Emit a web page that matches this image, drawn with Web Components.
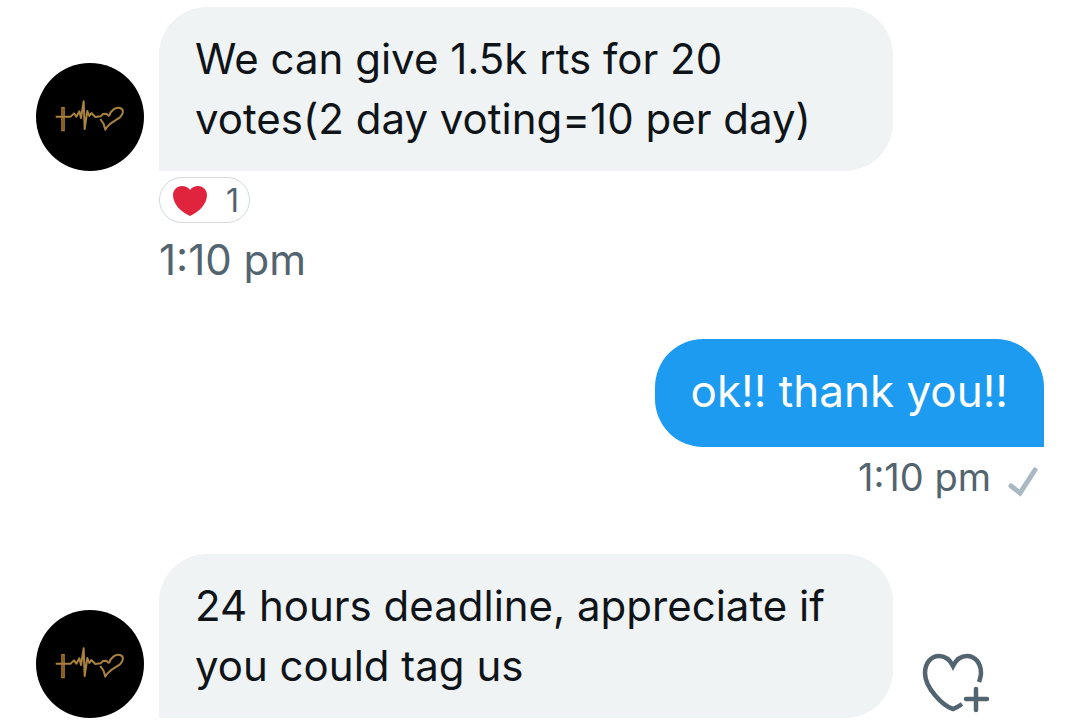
<!DOCTYPE html>
<html lang="en">
<head>
<meta charset="utf-8">
<meta name="viewport" content="width=device-width, initial-scale=1">
<title>Messages</title>
<style>
	body {
		margin: 0;
		background: #ffffff;
		color: #0f1419;
		font-family: Inter, "Noto Sans", sans-serif;
	}
</style>
</head>
<body>
<message-thread>
	<chat-message type="received">
		We can give 1.5k rts for 20 votes(2 day voting=10 per day)
		<reaction-pill slot="reactions" count="1"></reaction-pill>
		<message-time slot="time">1:10 pm</message-time>
	</chat-message>
	<chat-message type="sent">
		ok!! thank you!!
		<message-time slot="time" delivered>1:10 pm</message-time>
	</chat-message>
	<chat-message type="received">
		24 hours deadline, appreciate if you could tag us
		<add-reaction slot="action"></add-reaction>
	</chat-message>
</message-thread>

<script>
// Column of messages
class MessageThread extends HTMLElement {
	constructor() {
		super();
		this.attachShadow({ mode: 'open' });
		this.shadowRoot.innerHTML = `
			<style>
				:host {
					display: block;
				}
				main {
					display: flex;
					flex-direction: column;
					gap: 56px;
					padding: 7px 36px 0;
				}
			</style>
			<main><slot></slot></main>
		`;
	}
}
customElements.define('message-thread', MessageThread);

// Round profile picture: cross, heartbeat and heart in gold
class UserAvatar extends HTMLElement {
	constructor() {
		super();
		this.attachShadow({ mode: 'open' });
		this.shadowRoot.innerHTML = `
			<style>
				:host {
					display: block;
					width: 108px;
					height: 108px;
					border-radius: 50%;
					background: #000000;
					overflow: hidden;
				}
				svg {
					display: block;
					width: 100%;
					height: 100%;
				}
			</style>
			<svg viewBox="18 24 324 324" fill="none" stroke-linejoin="round" role="img" aria-label="Profile picture">
				<path d="M99 156V229" stroke="#a8772c" stroke-width="11"/>
				<path d="M99 160V225" stroke="#6a4718" stroke-width="3"/>
				<path d="M77 185H122L132 175L139 185L148 169L153 189L161 139L164 222L172 168L178 183L184 174L196 186L212 184L219 177L229 176L237 184" stroke="#a98240" stroke-width="6"/>
				<path d="M237 184C242 165 258 156 270 159C283 163 280 178 270 187C258 196 234 205 226 224L221 207L211 192" stroke="#a98240" stroke-width="6"/>
			</svg>
		`;
	}
}
customElements.define('user-avatar', UserAvatar);

// One message: avatar, bubble, optional action, with a footer under the bubble
class ChatMessage extends HTMLElement {
	constructor() {
		super();
		this.attachShadow({ mode: 'open' });
	}

	connectedCallback() {
		const received = this.getAttribute('type') === 'received';
		this.shadowRoot.innerHTML = `
			<style>
				:host {
					display: block;
				}
				article {
					display: grid;
					column-gap: 15px;
				}
				article.received {
					grid-template-columns: 108px 1fr 136px;
				}
				article.sent {
					grid-template-columns: 1fr;
				}
				user-avatar,
				.action {
					align-self: end;
				}
				.action {
					padding-left: 12px;
				}
				.bubble {
					margin: 0;
					padding: 22px 36px;
					border-radius: 48px 48px 48px 0;
					background: #eff3f4;
					font-size: 42px;
					line-height: 60px;
				}
				.sent .bubble {
					justify-self: end;
					padding-bottom: 26px;
					border-radius: 48px 48px 0 48px;
					background: #1d9bf0;
					color: #ffffff;
					font-size: 44px;
				}
				footer {
					display: flex;
					flex-direction: column;
					align-items: flex-start;
				}
				.received footer {
					grid-column: 2;
				}
				.sent footer {
					align-items: flex-end;
				}
			</style>
			<article class="${received ? 'received' : 'sent'}">
				${received ? '<user-avatar></user-avatar>' : ''}
				<p class="bubble"><slot></slot></p>
				${received ? '<div class="action"><slot name="action"></slot></div>' : ''}
				<footer>
					<slot name="reactions"></slot>
					<slot name="time"></slot>
				</footer>
			</article>
		`;
	}
}
customElements.define('chat-message', ChatMessage);

// Heart reaction with its count
class ReactionPill extends HTMLElement {
	constructor() {
		super();
		this.attachShadow({ mode: 'open' });
	}

	connectedCallback() {
		this.shadowRoot.innerHTML = `
			<style>
				:host {
					display: block;
					margin: 6px 0 9px;
				}
				button {
					display: flex;
					align-items: center;
					gap: 19px;
					height: 46px;
					margin: 0;
					padding: 2px 10px 0 13px;
					border: 1px solid #cfd9de;
					border-radius: 23px;
					background: #ffffff;
					color: #536471;
					font-family: inherit;
					font-size: 32px;
					line-height: 42px;
				}
				svg {
					width: 34px;
					height: 30px;
				}
			</style>
			<button type="button">
				<svg viewBox="0 0 34 30" aria-hidden="true">
					<path fill="#e0243d" d="M17 4C19 1 22 0 25 0C30 0 34 4 34 9C34 18 26 26 17 30C8 26 0 18 0 9C0 4 4 0 9 0C12 0 15 1 17 4Z"/>
				</svg>
				<span>${this.getAttribute('count')}</span>
			</button>
		`;
	}
}
customElements.define('reaction-pill', ReactionPill);

// Time of a message, with a tick once it is delivered
class MessageTime extends HTMLElement {
	constructor() {
		super();
		this.attachShadow({ mode: 'open' });
	}

	connectedCallback() {
		this.shadowRoot.innerHTML = `
			<style>
				:host {
					display: flex;
					gap: 17px;
					padding-top: 5px;
					color: #536471;
					font-size: 42px;
					line-height: 46px;
				}
				:host([delivered]) {
					padding-top: 9px;
					font-size: 38px;
					line-height: 42px;
				}
				svg {
					width: 36px;
					height: 42px;
				}
			</style>
			<time><slot></slot></time>
			${this.hasAttribute('delivered') ? `
				<svg viewBox="0 0 36 42" fill="none" stroke="#aab8c2" stroke-width="5" stroke-linecap="round" role="img" aria-label="Sent">
					<path d="M3 30L12 37L27 14"/>
				</svg>` : ''}
		`;
	}
}
customElements.define('message-time', MessageTime);

// Outlined heart with a plus
class AddReaction extends HTMLElement {
	constructor() {
		super();
		this.attachShadow({ mode: 'open' });
		this.shadowRoot.innerHTML = `
			<style>
				:host {
					display: block;
				}
				button {
					display: block;
					margin: 0;
					padding: 0;
					border: 0;
					background: none;
					color: #536471;
				}
				svg {
					display: block;
					width: 72px;
					height: 72px;
				}
			</style>
			<button type="button" aria-label="Add reaction">
				<svg viewBox="0 0 72 72" fill="none" stroke="currentColor" stroke-width="4.5">
					<path d="M59 36C60 33 61 30 61 27C61 17 55 10 47 10C40 10 36 14 33 20C30 14 26 10 19 10C11 10 5 17 5 27C5 42 23 60 33 63C36 62 39 60 42 58"/>
					<path d="M56 43V64M46 53H67" stroke-linecap="round"/>
				</svg>
			</button>
		`;
	}
}
customElements.define('add-reaction', AddReaction);
</script>
</body>
</html>
